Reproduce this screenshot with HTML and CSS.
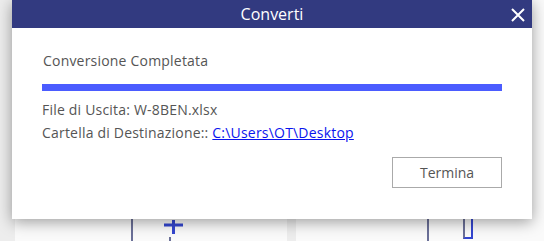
FILE: index.html
```html
<!DOCTYPE html>
<html lang="it">
<head>
    <meta charset="UTF-8">
    <title>Converti</title>
    <link rel="stylesheet" href="styles.css">
</head>
<body>
    <div class="workspace">
        <div class="panel">
            <div class="rule rule-a"></div>
            <div class="plus">
                <svg width="19" height="16" viewBox="0 0 19 16"><path d="M0 5h19M9.5 0v14" stroke="#3446d0" stroke-width="3" fill="none"/></svg>
            </div>
            <div class="tick"></div>
        </div>
        <div class="panel">
            <div class="rule rule-b"></div>
            <div class="bracket"></div>
        </div>
    </div>

    <div class="dialog">
        <div class="dialog-head">
            <span class="dialog-title">Converti</span>
            <svg class="dialog-close" width="14" height="14" viewBox="0 0 14 14"><path d="M1 1l12 12M13 1L1 13" stroke="#fff" stroke-width="2" fill="none"/></svg>
        </div>
        <div class="dialog-body">
            <div class="status">Conversione Completata</div>
            <div class="progress"></div>
            <div class="info">File di Uscita: W-8BEN.xlsx</div>
            <div class="info">Cartella di Destinazione:: <a href="#">C:\Users\OT\Desktop</a></div>
            <div class="actions">
                <button class="btn">Termina</button>
            </div>
        </div>
    </div>
</body>
</html>
```

FILE: styles.css
```css
body {
    margin: 0;
    width: 544px;
    height: 241px;
    overflow: hidden;
    background-color: #ededed;
    font-family: "Open Sans", "Liberation Sans", sans-serif;
    position: relative;
}
.workspace {
    display: flex;
    gap: 9px;
    padding-left: 15px;
    height: 241px;
}
.panel {
    position: relative;
    flex-shrink: 0;
    background-color: #fafafa;
    height: 241px;
}
.panel:first-child { width: 272px; }
.panel:last-child { width: 260px; }
.rule {
    position: absolute;
    bottom: 0;
    width: 2px;
    height: 60px;
    background-color: #6b7098;
}
.rule-a { left: 116px; }
.rule-b { left: 131px; }
.plus {
    position: absolute;
    left: 149px;
    top: 219px;
}
.tick {
    position: absolute;
    left: 154px;
    top: 237px;
    width: 2px;
    height: 6px;
    background-color: #6b7098;
}
.bracket {
    position: absolute;
    left: 167px;
    top: 200px;
    width: 6px;
    height: 37px;
    border-left: 2px solid #6b7098;
    border-right: 2px solid #3446d0;
    border-bottom: 2px solid #3446d0;
}

.dialog {
    position: absolute;
    left: 12px;
    top: 0;
    width: 520px;
    height: 219px;
    background-color: #ffffff;
    box-shadow: 0 3px 14px rgba(0, 0, 0, 0.38);
    z-index: 10;
}
.dialog-head {
    height: 28px;
    background-color: #323a80;
    display: flex;
    justify-content: center;
    align-items: center;
    position: relative;
}
.dialog-title {
    color: #ffffff;
    font-size: 16px;
    line-height: 28px;
}
.dialog-close {
    position: absolute;
    right: 7px;
    top: 8px;
}
.dialog-body {
    padding: 23px 30px 0 30px;
    color: #555555;
    font-size: 14px;
    letter-spacing: 0.2px;
}
.status {
    line-height: 19px;
    padding-left: 1px;
}
.progress {
    margin-top: 14px;
    height: 7px;
    background-color: #4b5cff;
}
.info {
    line-height: 23px;
}
.progress + .info { margin-top: 7px; }
.info a {
    color: #0a14ee;
}
.actions {
    display: flex;
    justify-content: flex-end;
    margin-top: 13px;
}
.btn {
    width: 110px;
    height: 31px;
    background-color: #ffffff;
    border: 1px solid #aaaaaa;
    color: #555555;
    font-family: "Open Sans", "Liberation Sans", sans-serif;
    font-size: 14px;
    padding: 0;
}
```
